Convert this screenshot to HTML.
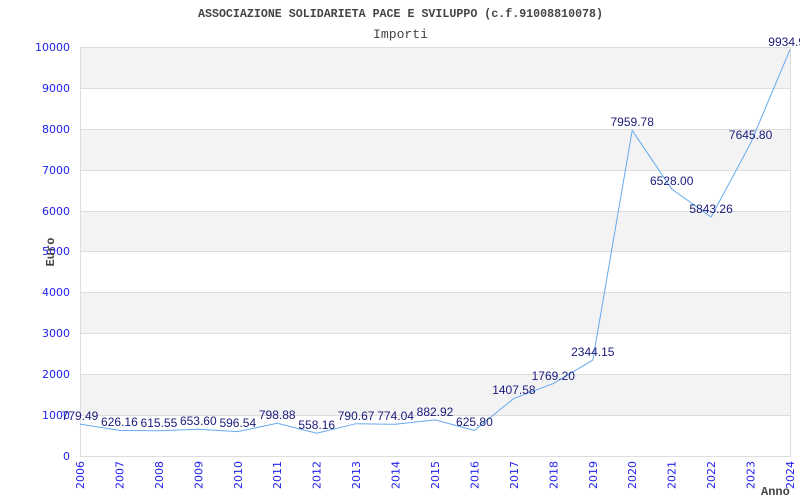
<!DOCTYPE html>
<html><head><style>
html,body{margin:0;padding:0;background:#fff;width:800px;height:500px;overflow:hidden}
</style></head><body>
<svg width="800" height="500" xmlns="http://www.w3.org/2000/svg">
<g fill="#f3f3f3">
<rect x="80" y="47" width="710" height="41"/>
<rect x="80" y="129" width="710" height="41"/>
<rect x="80" y="211" width="710" height="41"/>
<rect x="80" y="292" width="710" height="41"/>
<rect x="80" y="374" width="710" height="41"/>
</g>
<g stroke="#dddddd" stroke-width="1">
<line x1="80" y1="47.5" x2="790" y2="47.5"/>
<line x1="80" y1="88.5" x2="790" y2="88.5"/>
<line x1="80" y1="129.5" x2="790" y2="129.5"/>
<line x1="80" y1="170.5" x2="790" y2="170.5"/>
<line x1="80" y1="211.5" x2="790" y2="211.5"/>
<line x1="80" y1="251.5" x2="790" y2="251.5"/>
<line x1="80" y1="292.5" x2="790" y2="292.5"/>
<line x1="80" y1="333.5" x2="790" y2="333.5"/>
<line x1="80" y1="374.5" x2="790" y2="374.5"/>
<line x1="80" y1="415.5" x2="790" y2="415.5"/>
<line x1="80" y1="456.5" x2="790" y2="456.5"/>
<line x1="80.5" y1="47" x2="80.5" y2="457"/>
<line x1="790.5" y1="47" x2="790.5" y2="457"/>
</g>
<g font-family="'DejaVu Sans',sans-serif" font-size="11" fill="#2222ee" text-anchor="end">
<text x="70" y="51">10000</text>
<text x="70" y="92">9000</text>
<text x="70" y="133">8000</text>
<text x="70" y="174">7000</text>
<text x="70" y="215">6000</text>
<text x="70" y="255">5000</text>
<text x="70" y="296">4000</text>
<text x="70" y="337">3000</text>
<text x="70" y="378">2000</text>
<text x="70" y="419">1000</text>
<text x="70" y="460">0</text>
</g>
<g font-family="'DejaVu Sans',sans-serif" font-size="11" fill="#2222ee" text-anchor="end">
<text transform="translate(84,461) rotate(-90)">2006</text>
<text transform="translate(123.4,461) rotate(-90)">2007</text>
<text transform="translate(162.9,461) rotate(-90)">2008</text>
<text transform="translate(202.3,461) rotate(-90)">2009</text>
<text transform="translate(241.8,461) rotate(-90)">2010</text>
<text transform="translate(281.2,461) rotate(-90)">2011</text>
<text transform="translate(320.7,461) rotate(-90)">2012</text>
<text transform="translate(360.1,461) rotate(-90)">2013</text>
<text transform="translate(399.6,461) rotate(-90)">2014</text>
<text transform="translate(439,461) rotate(-90)">2015</text>
<text transform="translate(478.4,461) rotate(-90)">2016</text>
<text transform="translate(517.9,461) rotate(-90)">2017</text>
<text transform="translate(557.3,461) rotate(-90)">2018</text>
<text transform="translate(596.8,461) rotate(-90)">2019</text>
<text transform="translate(636.2,461) rotate(-90)">2020</text>
<text transform="translate(675.7,461) rotate(-90)">2021</text>
<text transform="translate(715.1,461) rotate(-90)">2022</text>
<text transform="translate(754.6,461) rotate(-90)">2023</text>
<text transform="translate(794,461) rotate(-90)">2024</text>
</g>
<polyline fill="none" stroke="#66aaee" stroke-width="1" points="80,424.1 119.4,430.4 158.9,430.8 198.3,429.3 237.8,431.6 277.2,423.3 316.7,433.2 356.1,423.7 395.6,424.3 435,419.9 474.4,430.4 513.9,398.4 553.3,383.6 592.8,360.1 632.2,130.4 671.7,189 711.1,217 750.6,143.3 790,49.7"/>
<g font-family="'Liberation Sans',sans-serif" font-size="12" fill="#1a1a7a" text-anchor="middle">
<text x="80" y="420">779.49</text>
<text x="119.4" y="426">626.16</text>
<text x="158.9" y="427">615.55</text>
<text x="198.3" y="425">653.60</text>
<text x="237.8" y="427">596.54</text>
<text x="277.2" y="419">798.88</text>
<text x="316.7" y="429">558.16</text>
<text x="356.1" y="420">790.67</text>
<text x="395.6" y="420">774.04</text>
<text x="435" y="416">882.92</text>
<text x="474.4" y="426">625.80</text>
<text x="513.9" y="394">1407.58</text>
<text x="553.3" y="380">1769.20</text>
<text x="592.8" y="356">2344.15</text>
<text x="632.2" y="126">7959.78</text>
<text x="671.7" y="185">6528.00</text>
<text x="711.1" y="213">5843.26</text>
<text x="750.6" y="139">7645.80</text>
<text x="790" y="46">9934.90</text>
</g>
<text x="198" y="17" textLength="405" lengthAdjust="spacingAndGlyphs" font-family="'Liberation Mono',monospace" font-weight="bold" font-size="12" fill="#444">ASSOCIAZIONE SOLIDARIETA PACE E SVILUPPO (c.f.91008810078)</text>
<text x="373" y="38" textLength="55" lengthAdjust="spacingAndGlyphs" font-family="'Liberation Mono',monospace" font-size="13" fill="#444">Importi</text>
<text transform="translate(54,252) rotate(-90)" font-family="'Liberation Mono',monospace" font-weight="bold" font-size="12" fill="#444" text-anchor="middle">Euro</text>
<text x="761" y="495" font-family="'Liberation Mono',monospace" font-weight="bold" font-size="12" fill="#444">Anno</text>
</svg>
</body></html>
